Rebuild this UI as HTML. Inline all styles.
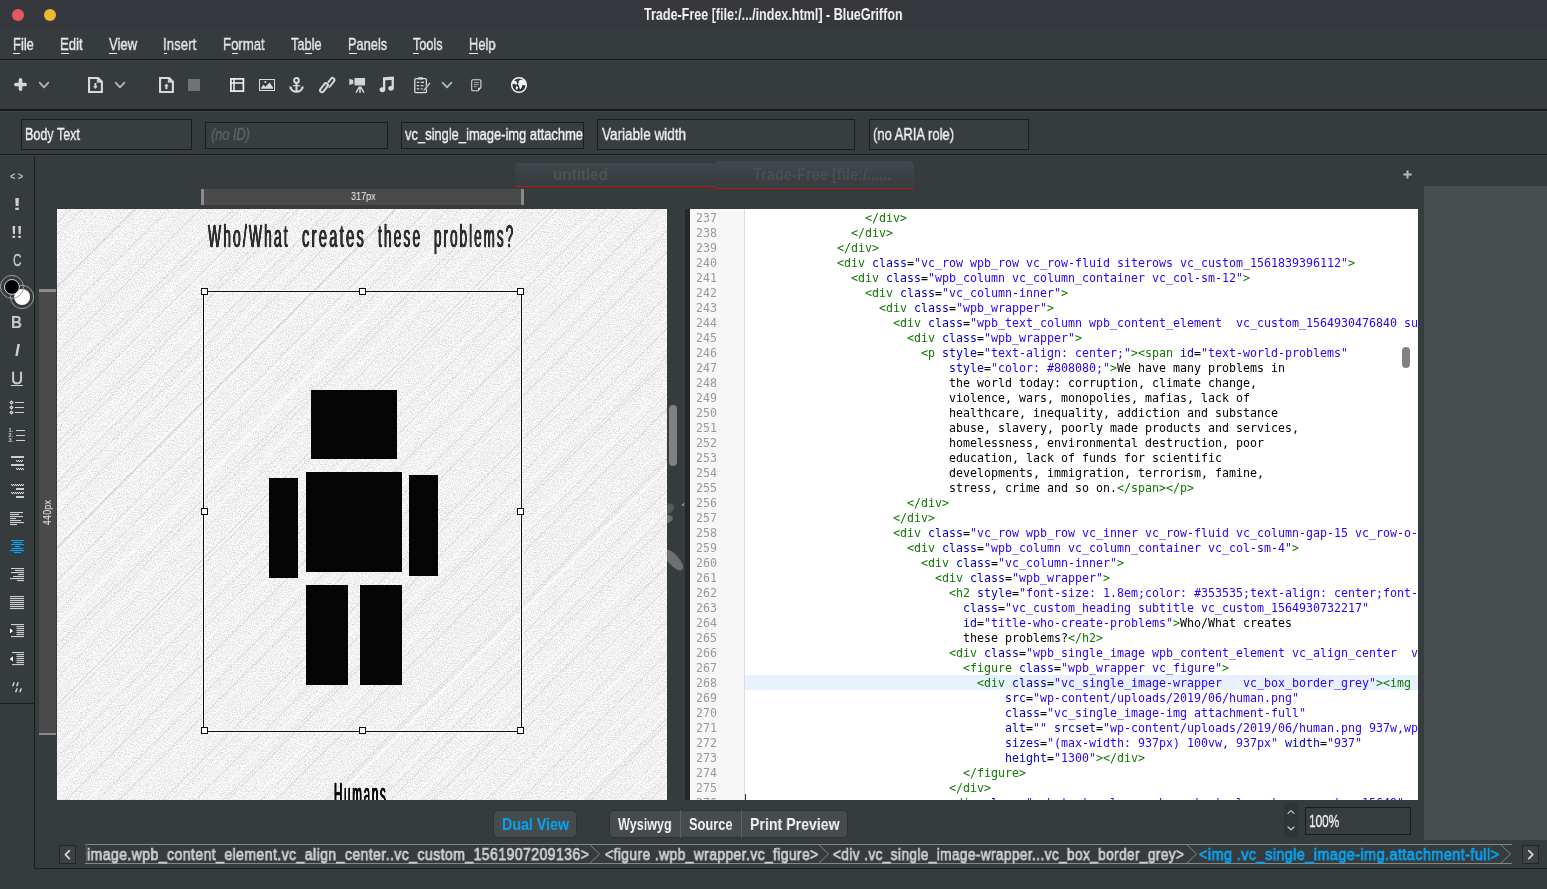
<!DOCTYPE html>
<html lang="en"><head><meta charset="utf-8"><title>Trade-Free - BlueGriffon</title>
<style>
html,body{margin:0;padding:0}
body{width:1547px;height:889px;position:relative;overflow:hidden;background:#363c3e;font-family:"Liberation Sans",sans-serif}
.a{position:absolute;box-sizing:border-box}
.t{position:absolute;white-space:nowrap;transform-origin:0 0;line-height:1;font-family:"Liberation Sans",sans-serif}
svg{position:absolute;overflow:visible;will-change:transform}
u{text-decoration:underline;text-underline-offset:3px;text-decoration-thickness:1px}
.code{position:absolute;font-family:"DejaVu Sans Mono","Liberation Mono",monospace;font-size:11.63px;line-height:15px;white-space:pre;color:#000}
.code .g{color:#117700}.code .n{color:#0000cc}.code .s{color:#2a00ff}
.ln{position:absolute;font-family:"DejaVu Sans Mono","Liberation Mono",monospace;font-size:11.63px;line-height:15px;color:#999;white-space:pre}
.code,.ln,.t{will-change:transform}

</style></head>
<body>
<div class="a" style="left:0px;top:0px;width:1547px;height:30px;background:#37383d;"></div>
<div class="a" style="left:12px;top:9px;width:12px;height:12px;border-radius:50%;background:#e55861"></div>
<div class="a" style="left:44px;top:9px;width:12px;height:12px;border-radius:50%;background:#ecb833"></div>
<div class="a" style="left:13.0px;top:53px;width:7.4px;height:1px;background:#e9e9e9;"></div>
<div class="a" style="left:60.6px;top:53px;width:8.4px;height:1px;background:#e9e9e9;"></div>
<div class="a" style="left:109.3px;top:53px;width:8.1px;height:1px;background:#e9e9e9;"></div>
<div class="a" style="left:163.8px;top:53px;width:3.3px;height:1px;background:#e9e9e9;"></div>
<div class="a" style="left:231.6px;top:53px;width:6.9px;height:1px;background:#e9e9e9;"></div>
<div class="a" style="left:304.9px;top:53px;width:6.7px;height:1px;background:#e9e9e9;"></div>
<div class="a" style="left:348.7px;top:53px;width:8.1px;height:1px;background:#e9e9e9;"></div>
<div class="a" style="left:413.0px;top:53px;width:5.9px;height:1px;background:#e9e9e9;"></div>
<div class="a" style="left:468.9px;top:53px;width:8.9px;height:1px;background:#e9e9e9;"></div>
<div class="a" style="left:0px;top:59px;width:1547px;height:1px;background:#17191a;"></div>
<div class="a" style="left:0px;top:60px;width:1547px;height:1px;background:#3f4548;"></div>
<svg style="left:14.4px;top:78.3px" width="13" height="13" viewBox="0 0 13 13"><path d="M6.5 1.9V11.1M1.9 6.5H11.1" stroke="#d6d6d6" stroke-width="3.7" stroke-linecap="round"/></svg>
<svg style="left:36px;top:79.2px" width="16" height="12" viewBox="0 0 16 12"><path d="M3.5999999999999996 3.7L8 8.3L12.4 3.7" fill="none" stroke="#b4b4b4" stroke-width="1.9" stroke-linecap="round" stroke-linejoin="round"/></svg>
<svg style="left:87.7px;top:77px" width="15.2" height="16.1" viewBox="0 0 15.2 16.1"><path d="M8.8 1.75H10.3L13.1 4.55V5.85H8.8Z" fill="#c9c9c9"/><path d="M1.05 1.05H10.2L13.9 4.75V15.05H1.05Z" fill="none" stroke="#d9d9d9" stroke-width="2.1" stroke-linejoin="miter"/><path d="M7.4 6.1V9.8" stroke="#d9d9d9" stroke-width="2.1"/><path d="M5.1 9.3L7.4 12.1L9.7 9.3Z" fill="#d9d9d9"/></svg>
<svg style="left:112px;top:79.2px" width="16" height="12" viewBox="0 0 16 12"><path d="M3.5999999999999996 3.7L8 8.3L12.4 3.7" fill="none" stroke="#b4b4b4" stroke-width="1.9" stroke-linecap="round" stroke-linejoin="round"/></svg>
<svg style="left:158.8px;top:77px" width="15.2" height="16.1" viewBox="0 0 15.2 16.1"><path d="M8.8 1.75H10.3L13.1 4.55V5.85H8.8Z" fill="#c9c9c9"/><path d="M1.05 1.05H10.2L13.9 4.75V15.05H1.05Z" fill="none" stroke="#d9d9d9" stroke-width="2.1" stroke-linejoin="miter"/><path d="M7.4 8.6V12.2" stroke="#d9d9d9" stroke-width="2.1"/><path d="M5.1 9.2L7.4 6.4L9.7 9.2Z" fill="#d9d9d9"/></svg>
<div class="a" style="left:188px;top:79px;width:12px;height:12px;background:#707273;"></div>
<svg style="left:229.7px;top:78px" width="15" height="14" viewBox="0 0 15 14"><rect x="0.9" y="0.9" width="12.5" height="12.2" fill="none" stroke="#f2f2f2" stroke-width="1.7"/><path d="M0.9 4.9H13.4M4.0 0.9V13.1" stroke="#f2f2f2" stroke-width="1.5"/></svg>
<svg style="left:259px;top:79px" width="16" height="12" viewBox="0 0 16 12"><rect x="0.5" y="0.5" width="15" height="11" fill="none" stroke="#d9d9d9" stroke-width="1"/><path d="M1.9 9.8V9L4.4 5.8L6.5 7.8L10.6 3.6L14 8.4V9.8Z" fill="#d9d9d9"/><circle cx="6.35" cy="2.95" r="1.05" fill="#d9d9d9"/></svg>
<svg style="left:289.0px;top:76.8px" width="15" height="16.4" viewBox="0 0 15 16.4"><circle cx="7.5" cy="3.4" r="2.4" fill="none" stroke="#d9d9d9" stroke-width="1.9"/><path d="M7.5 5.6V15.2" stroke="#d9d9d9" stroke-width="2" fill="none"/><path d="M3.8 8.7H11.2" stroke="#d9d9d9" stroke-width="1.2" fill="none"/><path d="M1.4 10.4C2.4 13.3 4.6 14.8 7.5 14.8C10.4 14.8 12.6 13.3 13.6 10.4" fill="none" stroke="#d9d9d9" stroke-width="1.9"/><path d="M0.3 9.3L3.2 10.1L0.9 12.3ZM14.7 9.3L11.8 10.1L14.1 12.3Z" fill="#d9d9d9"/></svg>
<svg style="left:318.8px;top:76.8px" width="17" height="16.4" viewBox="0 0 17 16.4"><rect x="-1.95" y="-5.2" width="3.9" height="10.4" rx="1.95" transform="translate(11.5 5.5) rotate(38)" fill="none" stroke="#d9d9d9" stroke-width="1.95"/><rect x="-1.95" y="-5.2" width="3.9" height="10.4" rx="1.95" transform="translate(5.0 10.7) rotate(38)" fill="none" stroke="#363c3e" stroke-width="3.0"/><rect x="-1.95" y="-5.2" width="3.9" height="10.4" rx="1.95" transform="translate(5.0 10.7) rotate(38)" fill="none" stroke="#d9d9d9" stroke-width="1.95"/><path d="M9.2 5.0L12.2 2.4" stroke="#363c3e" stroke-width="0" /></svg>
<svg style="left:348.6px;top:77.7px" width="17" height="15.4" viewBox="0 0 17 15.4"><path d="M0.3 0.8L4.3 2.1V5.7L0.3 6.9Z" fill="#d2d3d3"/><rect x="5.5" y="0" width="10.6" height="7.4" fill="#d2d3d3"/><path d="M11 8.6V14.9M10.6 8.6L7 14.6M11.4 8.6L15 14.6" stroke="#d2d3d3" stroke-width="1.5" fill="none"/></svg>
<svg style="left:379.4px;top:76.4px" width="15.4" height="16.8" viewBox="0 0 15.4 16.8"><path d="M3.95 1.13L14.8 0.5V3.8L3.95 4.45Z" fill="#d9d9d9"/><path d="M5.15 2V13.6M13.7 1.5V12.2" stroke="#d9d9d9" stroke-width="2.25" fill="none"/><ellipse cx="3.4" cy="13.8" rx="2.85" ry="2.45" fill="#d9d9d9"/><ellipse cx="12" cy="12.3" rx="2.75" ry="2.4" fill="#d9d9d9"/></svg>
<svg style="left:413.6px;top:76.8px" width="17" height="16.4" viewBox="0 0 17 16.4"><rect x="0.8" y="1.6" width="11.6" height="14" rx="1.2" fill="none" stroke="#d9d9d9" stroke-width="1.3"/><rect x="4" y="0.3" width="5.2" height="2.2" rx="0.8" fill="#d9d9d9"/><path d="M2.8 5.4H5.2M2.8 8.6H5.2M2.8 11.8H5.2M6.8 5.4H10M6.8 8.6H9.4M6.8 11.8H8.6" stroke="#d9d9d9" stroke-width="1.3"/><path d="M9.6 12.6L15.4 5.4L16.6 6.4L10.8 13.6L9 14.2Z" fill="#d9d9d9" stroke="#363c3e" stroke-width="0.5"/></svg>
<svg style="left:439px;top:79px" width="16" height="12" viewBox="0 0 16 12"><path d="M3.5999999999999996 3.7L8 8.3L12.4 3.7" fill="none" stroke="#b4b4b4" stroke-width="1.9" stroke-linecap="round" stroke-linejoin="round"/></svg>
<svg style="left:470.8px;top:78.8px" width="10.6" height="12.4" viewBox="0 0 10.6 12.4"><path d="M2 0.7H8.6Q9.9 0.7 9.9 2V8.6L7 11.7H2Q0.7 11.7 0.7 10.4V2Q0.7 0.7 2 0.7Z" fill="none" stroke="#d9d9d9" stroke-width="1.1"/><path d="M2.8 3.6H7.8M2.8 5.6H7.8M2.8 7.6H5.8" stroke="#9fa2a3" stroke-width="1"/><path d="M7 11.6V8.8H9.8Z" fill="#d9d9d9"/></svg>
<svg style="left:511px;top:76.9px" width="16" height="16" viewBox="0 0 16 16"><circle cx="8" cy="8" r="7.3" fill="#2f3437" stroke="#f6f6f6" stroke-width="1.5"/><g fill="#f6f6f6"><path d="M1.9 4.65L3.65 3.5L5.7 4.4L6.3 6.7L5.1 7.9L3.65 6.7L2.2 7.3Z"/><path d="M5.1 9L7.2 10.2L6.3 12.55L5.1 12.85L4.8 10.8Z"/><path d="M7.75 3.8L10.4 2.6L13.9 3.8L15 6.7L14.8 8.75L13.9 8.2L11.55 7.9L10.97 9.6L9.8 12.3L8.6 11.4L8 8.75L6.9 7.3L7.75 5.5Z"/></g></svg>
<div class="a" style="left:0px;top:109px;width:1547px;height:2px;background:#17191a;"></div>
<div class="a" style="left:0px;top:111px;width:1547px;height:1px;background:#3f4548;"></div>
<div class="a" style="left:21px;top:119px;width:171px;height:31px;border:1px solid #1a1d1f;background:#383e40"></div>
<div class="a" style="left:205px;top:122px;width:183px;height:27px;border:1px solid #1a1d1f;background:#383e40"></div>
<div class="a" style="left:401px;top:122px;width:183px;height:26.5px;border:1px solid #1a1d1f;background:#383e40"></div>
<div class="a" style="left:597px;top:119px;width:258px;height:30.5px;border:1px solid #1a1d1f;background:#383e40"></div>
<div class="a" style="left:869px;top:119px;width:160px;height:30.5px;border:1px solid #1a1d1f;background:#383e40"></div>
<div class="a" style="left:0px;top:154px;width:1547px;height:1px;background:#17191a;"></div>
<div class="a" style="left:0px;top:155px;width:1547px;height:1px;background:#3c4245;"></div>
<div class="a" style="left:34px;top:156px;width:1px;height:713px;background:#1b1e20;"></div>
<div class="a" style="left:0px;top:703px;width:35px;height:1px;background:#1b1e20;"></div>
<svg style="left:0px;top:274px" width="35" height="36" viewBox="0 0 35 36"><circle cx="22.1" cy="23" r="11.6" fill="none" stroke="#9c9e9e" stroke-width="1"/><circle cx="22.1" cy="23" r="8" fill="#fff"/><circle cx="11.9" cy="12.9" r="11.5" fill="none" stroke="#9c9e9e" stroke-width="1"/><circle cx="11.9" cy="12.9" r="7.4" fill="#000" stroke="#d2d2d2" stroke-width="1"/></svg>
<div class="a" style="left:11px;top:385px;width:12px;height:1px;background:#cfcfcf;"></div>
<svg style="left:0px;top:400px" width="35" height="16" viewBox="0 0 35 16"><rect x="15" y="2" width="9" height="1" fill="#cfcfcf"/><path d="M11.5 1.1L12.9 2.5L11.5 3.9L10.1 2.5Z" fill="none" stroke="#dcdcdc" stroke-width="1.15"/><rect x="15" y="7" width="9" height="1" fill="#cfcfcf"/><path d="M11.5 6.1L12.9 7.5L11.5 8.9L10.1 7.5Z" fill="none" stroke="#dcdcdc" stroke-width="1.15"/><rect x="15" y="12" width="9" height="1" fill="#cfcfcf"/><path d="M11.5 11.1L12.9 12.5L11.5 13.9L10.1 12.5Z" fill="none" stroke="#dcdcdc" stroke-width="1.15"/></svg>
<svg style="left:0px;top:428px" width="35" height="16" viewBox="0 0 35 16"><rect x="16" y="2" width="9" height="1" fill="#cfcfcf"/><text x="8.4" y="4.4" font-family="Liberation Sans, sans-serif" font-size="5.6" font-weight="bold" fill="#cfcfcf">1.</text><rect x="16" y="7" width="9" height="1" fill="#cfcfcf"/><text x="8.4" y="9.4" font-family="Liberation Sans, sans-serif" font-size="5.6" font-weight="bold" fill="#cfcfcf">2.</text><rect x="16" y="12" width="9" height="1" fill="#cfcfcf"/><text x="8.4" y="14.4" font-family="Liberation Sans, sans-serif" font-size="5.6" font-weight="bold" fill="#cfcfcf">3.</text></svg>
<svg style="left:0px;top:455px" width="35" height="16" viewBox="0 0 35 16"><rect x="11" y="1" width="13" height="2" fill="#cfcfcf"/><rect x="16" y="5" width="1" height="1" fill="#dadada"/><rect x="16" y="6" width="1" height="1" fill="#dadada" opacity="0.28"/><rect x="17" y="6" width="1" height="1" fill="#dadada"/><rect x="17" y="5" width="1" height="1" fill="#dadada" opacity="0.28"/><rect x="18" y="5" width="1" height="1" fill="#dadada"/><rect x="18" y="6" width="1" height="1" fill="#dadada" opacity="0.28"/><rect x="19" y="6" width="1" height="1" fill="#dadada"/><rect x="19" y="5" width="1" height="1" fill="#dadada" opacity="0.28"/><rect x="20" y="5" width="1" height="1" fill="#dadada"/><rect x="20" y="6" width="1" height="1" fill="#dadada" opacity="0.28"/><rect x="21" y="6" width="1" height="1" fill="#dadada"/><rect x="21" y="5" width="1" height="1" fill="#dadada" opacity="0.28"/><rect x="22" y="5" width="1" height="1" fill="#dadada"/><rect x="22" y="6" width="1" height="1" fill="#dadada" opacity="0.28"/><rect x="11" y="9" width="13" height="2" fill="#cfcfcf"/><rect x="16" y="13" width="1" height="1" fill="#dadada"/><rect x="16" y="14" width="1" height="1" fill="#dadada" opacity="0.28"/><rect x="17" y="14" width="1" height="1" fill="#dadada"/><rect x="17" y="13" width="1" height="1" fill="#dadada" opacity="0.28"/><rect x="18" y="13" width="1" height="1" fill="#dadada"/><rect x="18" y="14" width="1" height="1" fill="#dadada" opacity="0.28"/><rect x="19" y="14" width="1" height="1" fill="#dadada"/><rect x="19" y="13" width="1" height="1" fill="#dadada" opacity="0.28"/><rect x="20" y="13" width="1" height="1" fill="#dadada"/><rect x="20" y="14" width="1" height="1" fill="#dadada" opacity="0.28"/><rect x="21" y="14" width="1" height="1" fill="#dadada"/><rect x="21" y="13" width="1" height="1" fill="#dadada" opacity="0.28"/><rect x="22" y="13" width="1" height="1" fill="#dadada"/><rect x="22" y="14" width="1" height="1" fill="#dadada" opacity="0.28"/><rect x="23" y="14" width="1" height="1" fill="#dadada"/><rect x="23" y="13" width="1" height="1" fill="#dadada" opacity="0.28"/></svg>
<svg style="left:0px;top:483px" width="35" height="16" viewBox="0 0 35 16"><rect x="11" y="1" width="1" height="1" fill="#dadada"/><rect x="11" y="2" width="1" height="1" fill="#dadada" opacity="0.28"/><rect x="12" y="2" width="1" height="1" fill="#dadada"/><rect x="12" y="1" width="1" height="1" fill="#dadada" opacity="0.28"/><rect x="13" y="1" width="1" height="1" fill="#dadada"/><rect x="13" y="2" width="1" height="1" fill="#dadada" opacity="0.28"/><rect x="14" y="2" width="1" height="1" fill="#dadada"/><rect x="14" y="1" width="1" height="1" fill="#dadada" opacity="0.28"/><rect x="15" y="1" width="1" height="1" fill="#dadada"/><rect x="15" y="2" width="1" height="1" fill="#dadada" opacity="0.28"/><rect x="16" y="2" width="1" height="1" fill="#dadada"/><rect x="16" y="1" width="1" height="1" fill="#dadada" opacity="0.28"/><rect x="17" y="1" width="1" height="1" fill="#dadada"/><rect x="17" y="2" width="1" height="1" fill="#dadada" opacity="0.28"/><rect x="18" y="2" width="1" height="1" fill="#dadada"/><rect x="18" y="1" width="1" height="1" fill="#dadada" opacity="0.28"/><rect x="19" y="1" width="1" height="1" fill="#dadada"/><rect x="19" y="2" width="1" height="1" fill="#dadada" opacity="0.28"/><rect x="20" y="2" width="1" height="1" fill="#dadada"/><rect x="20" y="1" width="1" height="1" fill="#dadada" opacity="0.28"/><rect x="21" y="1" width="1" height="1" fill="#dadada"/><rect x="21" y="2" width="1" height="1" fill="#dadada" opacity="0.28"/><rect x="22" y="2" width="1" height="1" fill="#dadada"/><rect x="22" y="1" width="1" height="1" fill="#dadada" opacity="0.28"/><rect x="23" y="1" width="1" height="1" fill="#dadada"/><rect x="23" y="2" width="1" height="1" fill="#dadada" opacity="0.28"/><rect x="16" y="5" width="8" height="2" fill="#cfcfcf"/><rect x="11" y="9" width="1" height="1" fill="#dadada"/><rect x="11" y="10" width="1" height="1" fill="#dadada" opacity="0.28"/><rect x="12" y="10" width="1" height="1" fill="#dadada"/><rect x="12" y="9" width="1" height="1" fill="#dadada" opacity="0.28"/><rect x="13" y="9" width="1" height="1" fill="#dadada"/><rect x="13" y="10" width="1" height="1" fill="#dadada" opacity="0.28"/><rect x="14" y="10" width="1" height="1" fill="#dadada"/><rect x="14" y="9" width="1" height="1" fill="#dadada" opacity="0.28"/><rect x="15" y="9" width="1" height="1" fill="#dadada"/><rect x="15" y="10" width="1" height="1" fill="#dadada" opacity="0.28"/><rect x="16" y="10" width="1" height="1" fill="#dadada"/><rect x="16" y="9" width="1" height="1" fill="#dadada" opacity="0.28"/><rect x="17" y="9" width="1" height="1" fill="#dadada"/><rect x="17" y="10" width="1" height="1" fill="#dadada" opacity="0.28"/><rect x="18" y="10" width="1" height="1" fill="#dadada"/><rect x="18" y="9" width="1" height="1" fill="#dadada" opacity="0.28"/><rect x="19" y="9" width="1" height="1" fill="#dadada"/><rect x="19" y="10" width="1" height="1" fill="#dadada" opacity="0.28"/><rect x="20" y="10" width="1" height="1" fill="#dadada"/><rect x="20" y="9" width="1" height="1" fill="#dadada" opacity="0.28"/><rect x="21" y="9" width="1" height="1" fill="#dadada"/><rect x="21" y="10" width="1" height="1" fill="#dadada" opacity="0.28"/><rect x="22" y="10" width="1" height="1" fill="#dadada"/><rect x="22" y="9" width="1" height="1" fill="#dadada" opacity="0.28"/><rect x="23" y="9" width="1" height="1" fill="#dadada"/><rect x="23" y="10" width="1" height="1" fill="#dadada" opacity="0.28"/><rect x="16" y="13" width="8" height="2" fill="#cfcfcf"/></svg>
<svg style="left:0px;top:512px" width="35" height="16" viewBox="0 0 35 16"><rect x="10" y="0" width="13" height="1.1" fill="#cfcfcf"/><rect x="10" y="2" width="9" height="1.1" fill="#cfcfcf"/><rect x="10" y="4" width="13" height="1.1" fill="#cfcfcf"/><rect x="10" y="6" width="6" height="1.1" fill="#cfcfcf"/><rect x="10" y="8" width="11" height="1.1" fill="#cfcfcf"/><rect x="10" y="10" width="14" height="1.1" fill="#cfcfcf"/><rect x="10" y="12" width="7" height="1.1" fill="#cfcfcf"/></svg>
<svg style="left:0px;top:540px" width="35" height="16" viewBox="0 0 35 16"><rect x="11" y="0" width="13" height="1.1" fill="#08a4f4"/><rect x="13" y="2" width="9" height="1.1" fill="#08a4f4"/><rect x="11" y="4" width="13" height="1.1" fill="#08a4f4"/><rect x="15" y="6" width="5" height="1.1" fill="#08a4f4"/><rect x="12" y="8" width="11" height="1.1" fill="#08a4f4"/><rect x="10" y="10" width="14" height="1.1" fill="#08a4f4"/><rect x="14" y="12" width="7" height="1.1" fill="#08a4f4"/></svg>
<svg style="left:0px;top:568px" width="35" height="16" viewBox="0 0 35 16"><rect x="11" y="0" width="13" height="1.1" fill="#cfcfcf"/><rect x="15" y="2" width="9" height="1.1" fill="#cfcfcf"/><rect x="11" y="4" width="13" height="1.1" fill="#cfcfcf"/><rect x="18" y="6" width="6" height="1.1" fill="#cfcfcf"/><rect x="13" y="8" width="11" height="1.1" fill="#cfcfcf"/><rect x="10" y="10" width="14" height="1.1" fill="#cfcfcf"/><rect x="17" y="12" width="7" height="1.1" fill="#cfcfcf"/></svg>
<svg style="left:0px;top:596px" width="35" height="16" viewBox="0 0 35 16"><rect x="10" y="0" width="14" height="1.1" fill="#cfcfcf"/><rect x="10" y="2" width="14" height="1.1" fill="#cfcfcf"/><rect x="10" y="4" width="14" height="1.1" fill="#cfcfcf"/><rect x="10" y="6" width="14" height="1.1" fill="#cfcfcf"/><rect x="10" y="8" width="14" height="1.1" fill="#cfcfcf"/><rect x="10" y="10" width="14" height="1.1" fill="#cfcfcf"/><rect x="10" y="12" width="14" height="1.1" fill="#cfcfcf"/></svg>
<svg style="left:0px;top:624px" width="35" height="16" viewBox="0 0 35 16"><rect x="11" y="0" width="13" height="1.1" fill="#cfcfcf"/><rect x="16.5" y="2" width="7.5" height="1.1" fill="#cfcfcf"/><rect x="16.5" y="4" width="7.5" height="1.1" fill="#cfcfcf"/><rect x="16.5" y="6" width="7.5" height="1.1" fill="#cfcfcf"/><rect x="16.5" y="8" width="7.5" height="1.1" fill="#cfcfcf"/><rect x="16.5" y="10" width="7.5" height="1.1" fill="#cfcfcf"/><rect x="11" y="12" width="13" height="1.1" fill="#cfcfcf"/><path d="M9.4 3.2L13.6 6.9L9.4 10.6Z" fill="#fff" stroke="#111" stroke-width="0.8"/></svg>
<svg style="left:0px;top:652px" width="35" height="16" viewBox="0 0 35 16"><rect x="12" y="0" width="12" height="1.1" fill="#cfcfcf"/><rect x="16.5" y="2" width="7.5" height="1.1" fill="#cfcfcf"/><rect x="16.5" y="4" width="7.5" height="1.1" fill="#cfcfcf"/><rect x="16.5" y="6" width="7.5" height="1.1" fill="#cfcfcf"/><rect x="16.5" y="8" width="7.5" height="1.1" fill="#cfcfcf"/><rect x="16.5" y="10" width="7.5" height="1.1" fill="#cfcfcf"/><rect x="12" y="12" width="12" height="1.1" fill="#cfcfcf"/><path d="M13.4 3.2L9.2 6.9L13.4 10.6Z" fill="#fff" stroke="#111" stroke-width="0.8"/></svg>
<svg style="left:0px;top:681px" width="35" height="14" viewBox="0 0 35 14"><g stroke="#cfcfcf" stroke-width="1.5" stroke-linecap="butt"><path d="M14.2 1.4L12.6 5.2M18.2 1.4L16.6 5.2M17.2 7.4L15.6 11.2M21.4 7.4L19.8 11.2"/></g></svg>
<div class="a" style="left:515px;top:163px;width:200px;height:23.4px;border-radius:4px 4px 0 0;background:linear-gradient(#41474a,#393f42 60%,#363c3f)"></div>
<div class="a" style="left:714px;top:161px;width:200px;height:26.5px;border-radius:5px 5px 0 0;background:linear-gradient(#42484b,#3a4043 60%,#373d40)"></div>
<div class="a" style="left:515px;top:186.2px;width:200px;height:1.2px;background:#c01515;"></div>
<div class="a" style="left:714px;top:187.5px;width:200px;height:1px;background:#c01515;"></div>
<svg style="left:1402.5px;top:169.8px" width="9" height="9" viewBox="0 0 9 9"><path d="M4.5 0.4V8.6M0.4 4.5H8.6" stroke="#b9b9b9" stroke-width="2"/></svg>
<div class="a" style="left:1424px;top:186px;width:123px;height:654px;background:#484d50;"></div>
<div class="a" style="left:201px;top:189px;width:323px;height:16px;background:#4a4a4a;"></div>
<div class="a" style="left:201px;top:189px;width:2.6px;height:16px;background:#8a8a8a;"></div>
<div class="a" style="left:521.4px;top:189px;width:2.6px;height:16px;background:#8a8a8a;"></div>
<div class="a" style="left:39px;top:289px;width:17px;height:446px;background:#4a4a4a;"></div>
<div class="a" style="left:39px;top:289px;width:17px;height:2.6px;background:#8a8a8a;"></div>
<div class="a" style="left:39px;top:732.6px;width:17px;height:2.6px;background:#8a8a8a;"></div>
<div class="a" style="left:39px;top:500px;width:17px;height:24px"><span class="t" style="left:2.6px;top:24.5px;font-size:10.5px;color:#f2f2f2;letter-spacing:0.4px;transform:rotate(-90deg) scaleX(0.82);transform-origin:0 0">440px</span></div>
<svg style="left:0;top:0" width="0" height="0"><defs>
<filter id="nz" x="0" y="0" width="100%" height="100%" color-interpolation-filters="sRGB">
<feTurbulence type="fractalNoise" baseFrequency="0.85" numOctaves="2" seed="7" result="n"/>
<feColorMatrix in="n" type="matrix" values="0 0 0 0 0  0 0 0 0 0  0 0 0 0 0  0.34 0 0 0 -0.115"/>
</filter></defs></svg>
<div class="a" id="pv" style="left:57px;top:209px;width:610px;height:591px;background:#fff;overflow:hidden"><svg style="left:0;top:0" width="610" height="591"><rect width="610" height="591" fill="#777" filter="url(#nz)"/></svg><div class="a" style="left:0;top:0;width:610px;height:591px;background:repeating-linear-gradient(135deg,rgba(0,0,0,0) 0 9px,rgba(0,0,0,.05) 9px 10.2px,rgba(0,0,0,0) 10.2px 23px),repeating-linear-gradient(135deg,rgba(0,0,0,0) 0 17px,rgba(0,0,0,.045) 17px 18.6px,rgba(0,0,0,0) 18.6px 37px),repeating-linear-gradient(135deg,rgba(255,255,255,0) 0 4px,rgba(255,255,255,.38) 4px 5.6px,rgba(255,255,255,0) 5.6px 29px),repeating-linear-gradient(135deg,rgba(255,255,255,0) 0 30px,rgba(255,255,255,.34) 30px 32px,rgba(255,255,255,0) 32px 53px)"></div></div>
<div class="a" style="left:310.6px;top:390px;width:86.4px;height:69.2px;background:#050505;"></div>
<div class="a" style="left:305.6px;top:472px;width:96.4px;height:100.4px;background:#050505;"></div>
<div class="a" style="left:269.1px;top:477.8px;width:29.4px;height:100.0px;background:#050505;"></div>
<div class="a" style="left:409.3px;top:475.3px;width:28.7px;height:100.4px;background:#050505;"></div>
<div class="a" style="left:306.1px;top:584.8px;width:42.1px;height:100.0px;background:#050505;"></div>
<div class="a" style="left:360.2px;top:584.8px;width:42.1px;height:100.0px;background:#050505;"></div>
<div class="a" style="left:203px;top:291px;width:319px;height:441px;border:1px solid #0c0c0c;box-shadow:0 0 0 1px rgba(255,255,255,.55),inset 0 0 0 1px rgba(255,255,255,.55)"></div>
<div class="a" style="left:201px;top:288px;width:7px;height:7px;border:1px solid #0c0c0c;background:#fff"></div>
<div class="a" style="left:201px;top:508px;width:7px;height:7px;border:1px solid #0c0c0c;background:#fff"></div>
<div class="a" style="left:201px;top:727px;width:7px;height:7px;border:1px solid #0c0c0c;background:#fff"></div>
<div class="a" style="left:359px;top:288px;width:7px;height:7px;border:1px solid #0c0c0c;background:#fff"></div>
<div class="a" style="left:359px;top:727px;width:7px;height:7px;border:1px solid #0c0c0c;background:#fff"></div>
<div class="a" style="left:517px;top:288px;width:7px;height:7px;border:1px solid #0c0c0c;background:#fff"></div>
<div class="a" style="left:517px;top:508px;width:7px;height:7px;border:1px solid #0c0c0c;background:#fff"></div>
<div class="a" style="left:517px;top:727px;width:7px;height:7px;border:1px solid #0c0c0c;background:#fff"></div>
<div class="a" style="left:300px;top:770px;width:130px;height:30px;overflow:hidden"><span class="t" id="hum" style="left:33.9px;top:9.4px;font-size:31.7px;color:#0a0a0a;-webkit-text-stroke:0.4px #0a0a0a;text-shadow:1.2px 0 0 #0a0a0a,-1.2px 0 0 #0a0a0a;letter-spacing:5px;transform:scaleX(0.362)">Humans</span></div>
<div class="a" style="left:684.6px;top:209px;width:5.4px;height:591px;background:#26292b;"></div>
<div class="a" style="left:669px;top:405px;width:8px;height:61px;border-radius:4px;background:#808282"></div>
<div class="a" style="left:667.2px;top:470px;width:17.4px;height:120px;overflow:hidden"><svg style="left:-12.2px;top:0" width="30" height="120" viewBox="655 470 30 120"><ellipse cx="666.5" cy="509" rx="8" ry="5.2" transform="rotate(-20 666.5 509)" fill="#54595b"/><ellipse cx="664.5" cy="519.5" rx="8.6" ry="4.4" transform="rotate(-12 664.5 519.5)" fill="#6b6f71"/><ellipse cx="673.5" cy="560" rx="5.4" ry="13" transform="rotate(-42 673.5 560)" fill="#6c7072"/><path d="M681.2 505.6L684.6 502.2L683.6 505.9Z" fill="#9b9d9e"/></svg></div>
<div class="a" style="left:690px;top:209px;width:728px;height:591px;background:#fff;overflow:hidden">
<div class="a" style="left:0;top:0;width:55px;height:591px;background:#f7f7f7;border-right:1px solid #ddd"></div>
<div class="a" style="left:55px;top:465.5px;width:673px;height:15px;background:#e8f2ff"></div>
<div class="ln" style="left:6.3px;top:1.5px">237
238
239
240
241
242
243
244
245
246
247
248
249
250
251
252
253
254
255
256
257
258
259
260
261
262
263
264
265
266
267
268
269
270
271
272
273
274
275
276</div>
<div class="code" style="left:147px;top:1.5px">    <span class="g">&lt;/div</span><span class="g">&gt;</span>
  <span class="g">&lt;/div</span><span class="g">&gt;</span>
<span class="g">&lt;/div</span><span class="g">&gt;</span>
<span class="g">&lt;div</span> <span class="n">class</span>=<span class="s">&quot;vc_row wpb_row vc_row-fluid siterows vc_custom_1561839396112&quot;</span><span class="g">&gt;</span>
  <span class="g">&lt;div</span> <span class="n">class</span>=<span class="s">&quot;wpb_column vc_column_container vc_col-sm-12&quot;</span><span class="g">&gt;</span>
    <span class="g">&lt;div</span> <span class="n">class</span>=<span class="s">&quot;vc_column-inner&quot;</span><span class="g">&gt;</span>
      <span class="g">&lt;div</span> <span class="n">class</span>=<span class="s">&quot;wpb_wrapper&quot;</span><span class="g">&gt;</span>
        <span class="g">&lt;div</span> <span class="n">class</span>=<span class="s">&quot;wpb_text_column wpb_content_element  vc_custom_1564930476840 subtitle&quot;</span><span class="g">&gt;</span>
          <span class="g">&lt;div</span> <span class="n">class</span>=<span class="s">&quot;wpb_wrapper&quot;</span><span class="g">&gt;</span>
            <span class="g">&lt;p</span> <span class="n">style</span>=<span class="s">&quot;text-align: center;&quot;</span><span class="g">&gt;</span><span class="g">&lt;span</span> <span class="n">id</span>=<span class="s">&quot;text-world-problems&quot;</span>
                <span class="n">style</span>=<span class="s">&quot;color: #808080;&quot;</span><span class="g">&gt;</span>We have many problems in
                the world today: corruption, climate change,
                violence, wars, monopolies, mafias, lack of
                healthcare, inequality, addiction and substance
                abuse, slavery, poorly made products and services,
                homelessness, environmental destruction, poor
                education, lack of funds for scientific
                developments, immigration, terrorism, famine,
                stress, crime and so on.<span class="g">&lt;/span</span><span class="g">&gt;</span><span class="g">&lt;/p</span><span class="g">&gt;</span>
          <span class="g">&lt;/div</span><span class="g">&gt;</span>
        <span class="g">&lt;/div</span><span class="g">&gt;</span>
        <span class="g">&lt;div</span> <span class="n">class</span>=<span class="s">&quot;vc_row wpb_row vc_inner vc_row-fluid vc_column-gap-15 vc_row-o-equal-height&quot;</span><span class="g">&gt;</span>
          <span class="g">&lt;div</span> <span class="n">class</span>=<span class="s">&quot;wpb_column vc_column_container vc_col-sm-4&quot;</span><span class="g">&gt;</span>
            <span class="g">&lt;div</span> <span class="n">class</span>=<span class="s">&quot;vc_column-inner&quot;</span><span class="g">&gt;</span>
              <span class="g">&lt;div</span> <span class="n">class</span>=<span class="s">&quot;wpb_wrapper&quot;</span><span class="g">&gt;</span>
                <span class="g">&lt;h2</span> <span class="n">style</span>=<span class="s">&quot;font-size: 1.8em;color: #353535;text-align: center;font-weight:400&quot;</span><span class="g">&gt;</span>
                  <span class="n">class</span>=<span class="s">&quot;vc_custom_heading subtitle vc_custom_1564930732217&quot;</span>
                  <span class="n">id</span>=<span class="s">&quot;title-who-create-problems&quot;</span><span class="g">&gt;</span>Who/What creates
                  these problems?<span class="g">&lt;/h2</span><span class="g">&gt;</span>
                <span class="g">&lt;div</span> <span class="n">class</span>=<span class="s">&quot;wpb_single_image wpb_content_element vc_align_center  vc_custom_1561907209136&quot;</span><span class="g">&gt;</span>
                  <span class="g">&lt;figure</span> <span class="n">class</span>=<span class="s">&quot;wpb_wrapper vc_figure&quot;</span><span class="g">&gt;</span>
                    <span class="g">&lt;div</span> <span class="n">class</span>=<span class="s">&quot;vc_single_image-wrapper   vc_box_border_grey&quot;</span><span class="g">&gt;</span><span class="g">&lt;img</span>
                        <span class="n">src</span>=<span class="s">&quot;wp-content/uploads/2019/06/human.png&quot;</span>
                        <span class="n">class</span>=<span class="s">&quot;vc_single_image-img attachment-full&quot;</span>
                        <span class="n">alt</span>=<span class="s">&quot;&quot;</span> <span class="n">srcset</span>=<span class="s">&quot;wp-content/uploads/2019/06/human.png 937w,wp-content/uploads/2019/06/human-216x300.png 216w&quot;</span>
                        <span class="n">sizes</span>=<span class="s">&quot;(max-width: 937px) 100vw, 937px&quot;</span> <span class="n">width</span>=<span class="s">&quot;937&quot;</span>
                        <span class="n">height</span>=<span class="s">&quot;1300&quot;</span><span class="g">&gt;</span><span class="g">&lt;/div</span><span class="g">&gt;</span>
                  <span class="g">&lt;/figure</span><span class="g">&gt;</span>
                <span class="g">&lt;/div</span><span class="g">&gt;</span>
                <span class="g">&lt;div</span> <span class="n">class</span>=<span class="s">&quot;wpb_text_column wpb_content_element  vc_custom_15649&quot;</span><span class="g">&gt;</span></div>
<div class="a" style="left:54.5px;top:585px;width:1px;height:6px;background:#333"></div>
<div class="a" style="left:712px;top:138px;width:8px;height:21px;border-radius:4px;background:#808282"></div>
</div>
<div class="a" style="left:493px;top:810px;width:84px;height:28px;border-radius:5px;background:#464b4e;border:1px solid #2e3234"></div>
<div class="a" style="left:609px;top:810px;width:239px;height:28px;border-radius:5px;background:#464b4e;border:1px solid #2e3234"></div>
<div class="a" style="left:680px;top:810px;width:1px;height:28px;background:#5d6265;"></div>
<div class="a" style="left:741.3px;top:810px;width:1px;height:28px;background:#5d6265;"></div>
<div class="a" style="left:1284px;top:802px;width:13.6px;height:36px;background:#303537;"></div>
<svg style="left:1284px;top:802px" width="14" height="36" viewBox="0 0 14 36"><path d="M4 11.4L7 8.6L10 11.4M4 25L7 27.8L10 25" fill="none" stroke="#c8c8c8" stroke-width="1.2" stroke-linecap="round" stroke-linejoin="round"/></svg>
<div class="a" style="left:1305px;top:807px;width:106px;height:28px;border:1px solid #1a1d1f;background:#383e40"></div>
<div class="a" style="left:85px;top:843.5px;width:1427px;height:1px;background:#848686;"></div>
<div class="a" style="left:85px;top:862.6px;width:1427px;height:1px;background:#848686;"></div>
<div class="a" style="left:59px;top:845px;width:17px;height:19px;border:1px solid #23272a;background:#3b4144"></div>
<div class="a" style="left:1521.5px;top:844.5px;width:17px;height:19px;border:1px solid #23272a;background:#3b4144"></div>
<svg style="left:59px;top:845px" width="17" height="19" viewBox="0 0 17 19"><path d="M10.4 5.6L6.4 9.6L10.4 13.6" fill="none" stroke="#d8d8d8" stroke-width="1.7" stroke-linecap="round" stroke-linejoin="round"/></svg>
<svg style="left:1521.5px;top:844.5px" width="17" height="19" viewBox="0 0 17 19"><path d="M6.8 5.6L10.8 9.6L6.8 13.6" fill="none" stroke="#d8d8d8" stroke-width="1.7" stroke-linecap="round" stroke-linejoin="round"/></svg>
<div class="a" style="left:85.5px;top:844px;width:1px;height:19px;background:#5a5e60;"></div>
<svg style="left:589.2px;top:843.5px" width="12" height="20" viewBox="0 0 12 20"><path d="M0.6 0.5L10.6 10L0.6 19.5" fill="none" stroke="#848686" stroke-width="1"/></svg>
<svg style="left:818px;top:843.5px" width="12" height="20" viewBox="0 0 12 20"><path d="M0.6 0.5L10.6 10L0.6 19.5" fill="none" stroke="#848686" stroke-width="1"/></svg>
<svg style="left:1186px;top:843.5px" width="12" height="20" viewBox="0 0 12 20"><path d="M0.6 0.5L10.6 10L0.6 19.5" fill="none" stroke="#848686" stroke-width="1"/></svg>
<svg style="left:1500px;top:843.5px" width="12" height="20" viewBox="0 0 12 20"><path d="M0.6 0.5L10.6 10L0.6 19.5" fill="none" stroke="#848686" stroke-width="1"/></svg>
<div class="a" style="left:34px;top:867.6px;width:1513px;height:1.4px;background:#1b1e20;"></div>
<span class="t" style="left:644.1px;top:5.61px;font-size:17px;color:#f2f2f2;transform:scaleX(0.7380);font-weight:bold;">Trade-Free [file:/.../index.html] - BlueGriffon</span>
<span class="t" style="left:12.6px;top:36.21px;font-size:17px;color:#e9e9e9;transform:scaleX(0.7553);-webkit-text-stroke:0.35px #e9e9e9;">File</span>
<span class="t" style="left:60.2px;top:36.21px;font-size:17px;color:#e9e9e9;transform:scaleX(0.7748);-webkit-text-stroke:0.35px #e9e9e9;">Edit</span>
<span class="t" style="left:108.9px;top:36.21px;font-size:17px;color:#e9e9e9;transform:scaleX(0.7689);-webkit-text-stroke:0.35px #e9e9e9;">View</span>
<span class="t" style="left:163.4px;top:36.21px;font-size:17px;color:#e9e9e9;transform:scaleX(0.7806);-webkit-text-stroke:0.35px #e9e9e9;">Insert</span>
<span class="t" style="left:223.2px;top:36.21px;font-size:17px;color:#e9e9e9;transform:scaleX(0.7745);-webkit-text-stroke:0.35px #e9e9e9;">Format</span>
<span class="t" style="left:291px;top:36.21px;font-size:17px;color:#e9e9e9;transform:scaleX(0.7505);-webkit-text-stroke:0.35px #e9e9e9;">Table</span>
<span class="t" style="left:348.3px;top:36.21px;font-size:17px;color:#e9e9e9;transform:scaleX(0.7521);-webkit-text-stroke:0.35px #e9e9e9;">Panels</span>
<span class="t" style="left:412.6px;top:36.21px;font-size:17px;color:#e9e9e9;transform:scaleX(0.7433);-webkit-text-stroke:0.35px #e9e9e9;">Tools</span>
<span class="t" style="left:468.5px;top:36.21px;font-size:17px;color:#e9e9e9;transform:scaleX(0.7578);-webkit-text-stroke:0.35px #e9e9e9;">Help</span>
<span class="t" style="left:25.3px;top:125.93px;font-size:16.5px;color:#f2f2f2;transform:scaleX(0.7608);-webkit-text-stroke:0.35px #f2f2f2;">Body Text</span>
<span class="t" style="left:210.7px;top:126.43px;font-size:16.5px;color:#5d6366;transform:scaleX(0.7693);-webkit-text-stroke:0.35px #5d6366;font-style:italic;">(no ID)</span>
<span class="t" style="left:405px;top:126.03px;font-size:16.5px;color:#f2f2f2;transform:scaleX(0.7826);-webkit-text-stroke:0.35px #f2f2f2;">vc_single_image-img attachme</span>
<span class="t" style="left:602px;top:125.73px;font-size:16.5px;color:#f2f2f2;transform:scaleX(0.8201);-webkit-text-stroke:0.35px #f2f2f2;">Variable width</span>
<span class="t" style="left:873px;top:125.73px;font-size:16.5px;color:#f2f2f2;transform:scaleX(0.7886);-webkit-text-stroke:0.35px #f2f2f2;">(no ARIA role)</span>
<span class="t" style="left:10.1px;top:171.11px;font-size:10.5px;color:#c4c4c4;transform:scaleX(0.8691);font-weight:bold;">&lt; &gt;</span>
<span class="t" style="left:13.4px;top:197.19px;font-size:15.6px;color:#cfcfcf;transform:scaleX(1.5760);font-weight:bold;">!</span>
<span class="t" style="left:11.0px;top:224.99px;font-size:15.6px;color:#cfcfcf;transform:scaleX(1.1164);font-weight:bold;">!!</span>
<span class="t" style="left:12.8px;top:252.09px;font-size:16.2px;color:#cfcfcf;transform:scaleX(0.7178);-webkit-text-stroke:0.4px #cfcfcf;">C</span>
<span class="t" style="left:11.3px;top:314.66px;font-size:16px;color:#cfcfcf;transform:scaleX(0.9427);font-weight:bold;">B</span>
<span class="t" style="left:15.0px;top:342.43px;font-size:16.5px;color:#cfcfcf;transform:scaleX(1.0014);font-weight:bold;font-style:italic;">I</span>
<span class="t" style="left:11.1px;top:370.55px;font-size:16.6px;color:#cfcfcf;transform:scaleX(1.0096);-webkit-text-stroke:0.5px #cfcfcf;">U</span>
<span class="t" style="left:552.6px;top:166.43px;font-size:16.5px;color:#4d5356;transform:scaleX(0.9215);font-weight:bold;">untitled</span>
<span class="t" style="left:752.6px;top:166.43px;font-size:16.5px;color:#4a5053;transform:scaleX(0.8879);font-weight:bold;">Trade-Free [file:/......</span>
<span class="t" style="left:350.9px;top:191.01px;font-size:10.5px;color:#f2f2f2;transform:scaleX(0.8634);">317px</span>
<span class="t" style="left:208.4px;top:220.57px;font-size:31.7px;color:#2e2e2e;transform:scaleX(0.4353);-webkit-text-stroke:0.4px #2e2e2e;text-shadow:1px 0 0 #2e2e2e,-1px 0 0 #2e2e2e;letter-spacing:5px;">Who/What</span>
<span class="t" style="left:301.79999999999995px;top:220.57px;font-size:31.7px;color:#2e2e2e;transform:scaleX(0.4614);-webkit-text-stroke:0.4px #2e2e2e;text-shadow:1px 0 0 #2e2e2e,-1px 0 0 #2e2e2e;letter-spacing:5px;">creates</span>
<span class="t" style="left:378.2px;top:220.57px;font-size:31.7px;color:#2e2e2e;transform:scaleX(0.4311);-webkit-text-stroke:0.4px #2e2e2e;text-shadow:1px 0 0 #2e2e2e,-1px 0 0 #2e2e2e;letter-spacing:5px;">these</span>
<span class="t" style="left:434.0px;top:220.57px;font-size:31.7px;color:#2e2e2e;transform:scaleX(0.4208);-webkit-text-stroke:0.4px #2e2e2e;text-shadow:1px 0 0 #2e2e2e,-1px 0 0 #2e2e2e;letter-spacing:5px;">problems?</span>
<span class="t" style="left:501.7px;top:815.61px;font-size:17px;color:#08a4f4;transform:scaleX(0.8387);font-weight:bold;">Dual View</span>
<span class="t" style="left:617.7px;top:815.61px;font-size:17px;color:#f4f4f4;transform:scaleX(0.7413);font-weight:bold;">Wysiwyg</span>
<span class="t" style="left:689px;top:815.61px;font-size:17px;color:#f4f4f4;transform:scaleX(0.7547);font-weight:bold;">Source</span>
<span class="t" style="left:750.2px;top:815.61px;font-size:17px;color:#f4f4f4;transform:scaleX(0.8318);font-weight:bold;">Print Preview</span>
<span class="t" style="left:1308.8px;top:812.83px;font-size:16.5px;color:#f4f4f4;transform:scaleX(0.7156);-webkit-text-stroke:0.35px #f4f4f4;">100%</span>
<span class="t" style="left:86.9px;top:846.86px;font-size:16px;color:#cdcdcd;transform:scaleX(0.8766);-webkit-text-stroke:0.75px #cdcdcd;letter-spacing:0.5px;">image.wpb_content_element.vc_align_center..vc_custom_1561907209136&gt;</span>
<span class="t" style="left:604.6px;top:846.86px;font-size:16px;color:#cdcdcd;transform:scaleX(0.8625);-webkit-text-stroke:0.75px #cdcdcd;letter-spacing:0.5px;">&lt;figure .wpb_wrapper.vc_figure&gt;</span>
<span class="t" style="left:833px;top:846.86px;font-size:16px;color:#cdcdcd;transform:scaleX(0.8484);-webkit-text-stroke:0.75px #cdcdcd;letter-spacing:0.5px;">&lt;div .vc_single_image-wrapper...vc_box_border_grey&gt;</span>
<span class="t" style="left:1199.4px;top:846.86px;font-size:16px;color:#08a4f4;transform:scaleX(0.8993);-webkit-text-stroke:0.75px #08a4f4;letter-spacing:0.5px;">&lt;img .vc_single_image-img.attachment-full&gt;</span>
</body></html>
